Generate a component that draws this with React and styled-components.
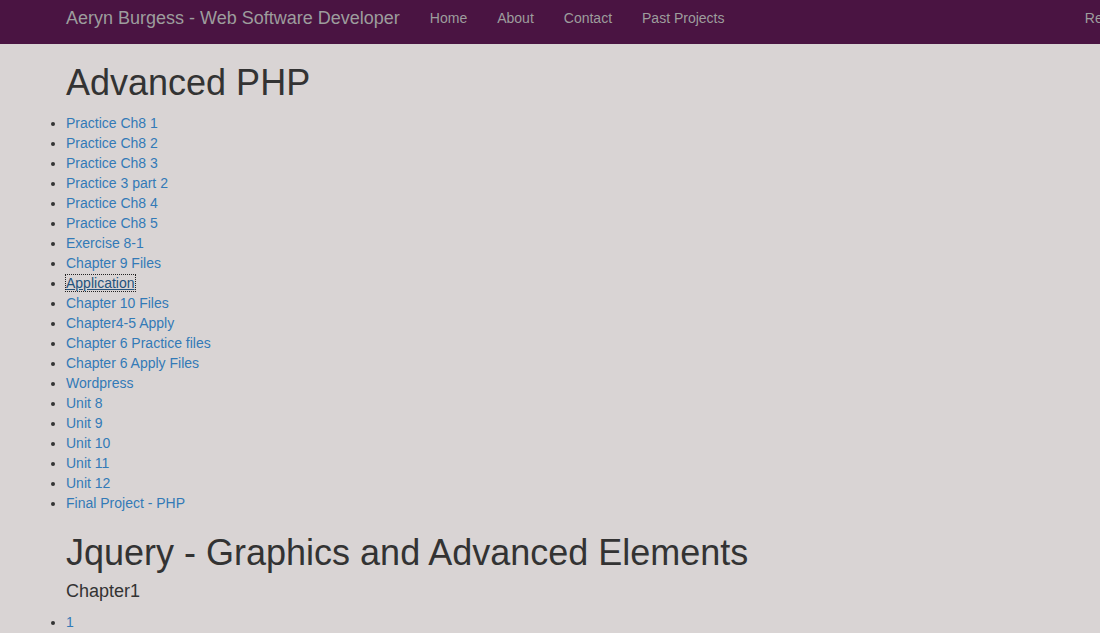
import React from 'react';
import styled, { createGlobalStyle } from 'styled-components';

const GlobalStyle = createGlobalStyle`
  html, body {
    margin: 0;
    padding: 0;
    background: #d9d4d4;
    overflow: hidden;
  }
  body {
    font-family: "Liberation Sans", Arial, Helvetica, sans-serif;
    font-size: 14px;
    line-height: 20px;
    color: #333;
  }
`;

const Navbar = styled.nav`
  display: flex;
  align-items: flex-start;
  height: 44px;
  background: #4a1442;
  padding-left: 51px;
  white-space: nowrap;
`;

const Brand = styled.a`
  padding: 8px 15px;
  font-size: 18px;
  line-height: 20px;
  color: #9d9d9d;
  text-decoration: none;
`;

const NavList = styled.ul`
  display: flex;
  margin: 0;
  padding: 0;
  list-style: none;
  margin-left: ${p => (p.$right ? 'auto' : '0')};
  margin-right: ${p => (p.$right ? '-52px' : '0')};
`;

const NavLink = styled.a`
  display: block;
  padding: 8px 15px;
  font-size: 14px;
  line-height: 20px;
  color: #9d9d9d;
  text-decoration: none;
`;

const Main = styled.main`
  padding-left: 66px;
`;

const Title = styled.h1`
  margin: ${p => (p.$first ? '19px' : '20px')} 0 10px;
  font-size: 36px;
  font-weight: 500;
  line-height: 1.1;
  color: #333;
`;

const Subtitle = styled.h4`
  margin: 10px 0 10px;
  font-size: 18px;
  font-weight: 500;
  line-height: 1.1;
  color: #333;
`;

const LinkList = styled.ul`
  margin: 0 0 10px;
  padding: 0;
`;

const Item = styled.li`
  line-height: 20px;
`;

const ItemLink = styled.a`
  color: ${p => (p.$focused ? '#23527c' : '#337ab7')};
  text-decoration: ${p => (p.$focused ? 'underline' : 'none')};
  outline: ${p => (p.$focused ? '1px dotted #222' : 'none')};
`;

const phpLinks = [
  'Practice Ch8 1',
  'Practice Ch8 2',
  'Practice Ch8 3',
  'Practice 3 part 2',
  'Practice Ch8 4',
  'Practice Ch8 5',
  'Exercise 8-1',
  'Chapter 9 Files',
  'Application',
  'Chapter 10 Files',
  'Chapter4-5 Apply',
  'Chapter 6 Practice files',
  'Chapter 6 Apply Files',
  'Wordpress',
  'Unit 8',
  'Unit 9',
  'Unit 10',
  'Unit 11',
  'Unit 12',
  'Final Project - PHP',
];

export default function App() {
  return (
    <>
      <GlobalStyle />
      <Navbar>
        <Brand href="#">Aeryn Burgess - Web Software Developer</Brand>
        <NavList>
          <li><NavLink href="#">Home</NavLink></li>
          <li><NavLink href="#">About</NavLink></li>
          <li><NavLink href="#">Contact</NavLink></li>
          <li><NavLink href="#">Past Projects</NavLink></li>
        </NavList>
        <NavList $right>
          <li><NavLink href="#">Resume</NavLink></li>
        </NavList>
      </Navbar>
      <Main>
        <Title $first>Advanced PHP</Title>
        <LinkList>
          {phpLinks.map(label => (
            <Item key={label}>
              <ItemLink href="#" $focused={label === 'Application'}>{label}</ItemLink>
            </Item>
          ))}
        </LinkList>
        <Title>Jquery - Graphics and Advanced Elements</Title>
        <Subtitle>Chapter1</Subtitle>
        <LinkList>
          <Item><ItemLink href="#">1</ItemLink></Item>
        </LinkList>
      </Main>
    </>
  );
}
